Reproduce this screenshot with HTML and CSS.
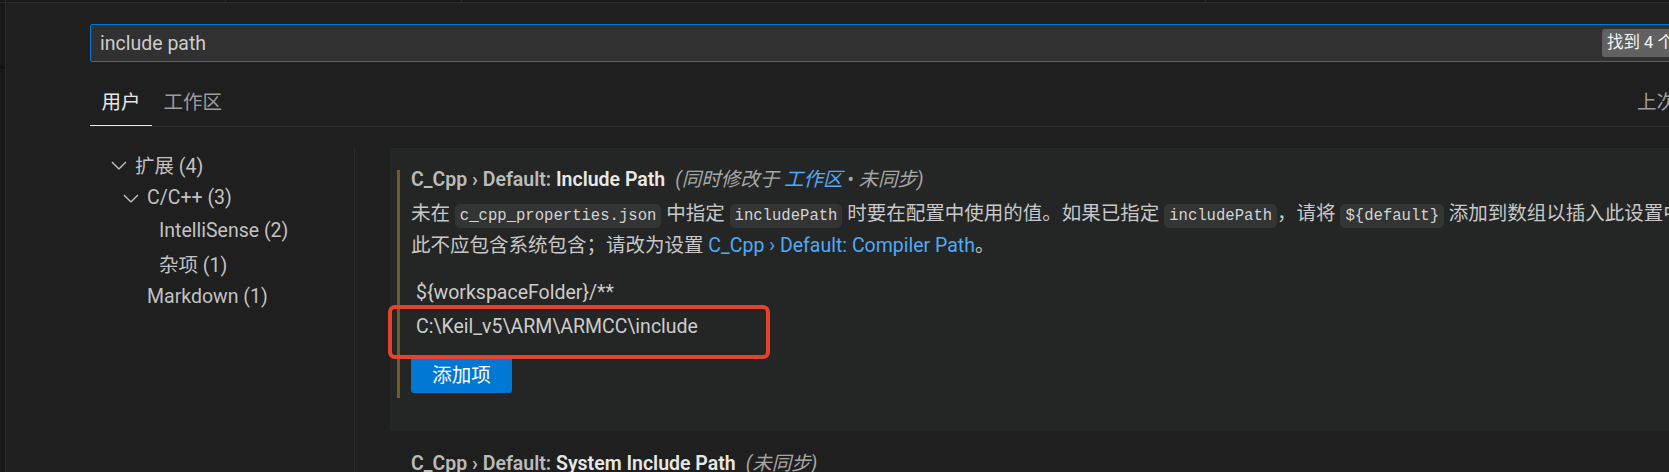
FILE: index.html
```html
<!DOCTYPE html>
<html lang="zh-CN">
<head>
  <meta charset="UTF-8">
  <meta name="viewport" content="width=device-width, initial-scale=1.0">
  <title>设置</title>
  <link rel="stylesheet" href="styles.css">
</head>
<body>
  <div class="tabstrip">
    <span class="strip-cell w1"></span>
    <span class="strip-cell w2"></span>
    <span class="strip-cell w3"></span>
    <span class="strip-cell w4"></span>
  </div>

  <div class="workbench">
    <div class="gutter"><div class="gutter-mark"></div></div>

    <div class="editor">
      <!-- search + scope tabs -->
      <div class="search">
        <div class="search-text">include path</div>
        <div class="count-badge">找到 4 个设置</div>
      </div>

      <div class="tabs">
        <div class="tab active">用户</div>
        <div class="tab">工作区</div>
        <div class="sync">上次同步: 刚刚</div>
      </div>

      <div class="main">
        <!-- table of contents -->
        <nav class="toc">
          <div class="toc-row l1">
            <span class="twistie"><svg width="24" height="24" viewBox="0 0 16 16"><path d="M7.976 10.072l4.357-4.357.62.618L8.284 11h-.618L3 6.333l.619-.618 4.357 4.357z"/></svg></span>
            <span>扩展 (4)</span>
          </div>
          <div class="toc-row l2">
            <span class="twistie"><svg width="24" height="24" viewBox="0 0 16 16"><path d="M7.976 10.072l4.357-4.357.62.618L8.284 11h-.618L3 6.333l.619-.618 4.357 4.357z"/></svg></span>
            <span>C/C++ (3)</span>
          </div>
          <div class="toc-row l3">
            <span class="twistie"></span>
            <span>IntelliSense (2)</span>
          </div>
          <div class="toc-row l3">
            <span class="twistie"></span>
            <span>杂项 (1)</span>
          </div>
          <div class="toc-row l2">
            <span class="twistie"></span>
            <span>Markdown (1)</span>
          </div>
        </nav>

        <!-- setting items -->
        <div class="settings">
          <div class="setting modified">
            <div class="setting-title">
              <span class="cat">C_Cpp › Default: </span><span class="label">Include Path</span><span class="scope">(同时修改于 <a href="#">工作区</a> • 未同步)</span>
            </div>
            <p class="setting-desc">未在 <code>c_cpp_properties.json</code> 中指定 <code>includePath</code> 时要在配置中使用的值。如果已指定 <code>includePath</code>，请将 <code>${default}</code> 添加到数组以插入此设置中的值。通常，<br>此不应包含系统包含；请改为设置 <a href="#">C_Cpp › Default: Compiler Path</a>。</p>
            <div class="list">
              <div class="list-row">${workspaceFolder}/**</div>
              <div class="list-row marked">C:\Keil_v5\ARM\ARMCC\include</div>
            </div>
            <button class="add-btn">添加项</button>
          </div>

          <div class="setting plain">
            <div class="setting-title">
              <span class="cat">C_Cpp › Default: </span><span class="label">System Include Path</span><span class="scope">(未同步)</span>
            </div>
          </div>
        </div>
      </div>
    </div>
  </div>
</body>
</html>
```

FILE: styles.css
```css
* { box-sizing: border-box; }
html, body { margin: 0; height: 100%; }
body { background: #1f1f1f; color: #cccccc; font-family: Roboto, "Noto Sans CJK SC", sans-serif; font-size: 19.5px; overflow: hidden; }
a { color: #4daafc; text-decoration: none; }

.tabstrip { display: flex; height: 3px; background: #181818; border-bottom: 1px solid #2b2b2b; }
.strip-cell { border-right: 1px solid #2b2b2b; }
.strip-cell.w1 { width: 6px; }
.strip-cell.w2 { width: 220px; }
.strip-cell.w3 { width: 236px; }
.strip-cell.w4 { width: 744px; }

.workbench { display: flex; height: calc(100% - 3px); }
.gutter { width: 6px; flex: none; background: #181818; border-right: 1px solid #2b2b2b; }
.gutter-mark { height: 3px; margin-top: 63px; background: #111111; }
.editor { width: 1800px; flex: none; margin-left: 84px; }

.search { display: flex; align-items: center; height: 38px; margin-top: 21px; padding-left: 9px; background: #313131; border: 1px solid #0078d4; border-radius: 2px; }
.search-text { flex: 1; color: #cccccc; }
.count-badge { height: 28px; line-height: 28px; padding: 0 5px; margin-right: 177px; background: #616161; color: #f5f5f5; font-size: 16.5px; border-radius: 3px; white-space: nowrap; }

.tabs { display: flex; margin-top: 18px; border-bottom: 1px solid #2b2b2b; }
.tab { height: 46px; line-height: 45px; padding: 0 11.5px; color: #9d9d9d; border-bottom: 1px solid transparent; }
.tab.active { color: #e7e7e7; border-bottom-color: #e7e7e7; }
.sync { margin-left: auto; width: 253px; line-height: 45px; color: #9d9d9d; white-space: nowrap; }

.main { display: flex; margin-top: 21px; min-height: 400px; }
.toc { width: 265px; flex: none; border-right: 1px solid #2b2b2b; color: #c2c2c2; }
.toc-row { display: flex; align-items: center; height: 33px; padding-left: 17px; white-space: nowrap; }
.toc-row.l2 { padding-left: 29px; }
.toc-row.l3 { padding-left: 41px; }
.twistie { width: 24px; height: 24px; flex: none; margin-right: 4px; }
.twistie svg { display: block; fill: #c2c2c2; }

.settings { flex: 1; padding-left: 35px; }
.setting { position: relative; padding: 18px 21px 38px; background: #242625; }
.setting.modified::before { content: ""; position: absolute; left: 7px; top: 22px; bottom: 33px; width: 3px; background: #735a26; }
.setting.plain { background: none; padding-top: 19px; }
.setting-title { line-height: 27px; white-space: nowrap; }
.cat { color: #bbbbbb; font-weight: 600; }
.label { color: #e8e8e8; font-weight: 600; }
.scope { margin-left: 10px; font-style: italic; color: #a6a6a6; }
.setting-desc { margin: 6px 0 0; line-height: 29px; white-space: nowrap; color: #c8c8c8; }
code { font-family: "Liberation Mono", monospace; font-size: 15.6px; padding: 3px 5px; background: #333534; color: #d4d4d4; border-radius: 5px; }

.list { margin-top: 15.5px; }
.list-row { position: relative; height: 34px; line-height: 34px; padding-left: 5px; color: #cccccc; }
.list-row.marked::after { content: ""; position: absolute; left: -23px; top: -5px; width: 374px; height: 46px; border: 4px solid #e8412c; border-radius: 7px; }

.add-btn { display: block; margin-top: 11px; width: 101px; height: 38px; padding: 0; background: #0078d4; color: #ffffff; border: none; border-radius: 3px; font: inherit; }
```
